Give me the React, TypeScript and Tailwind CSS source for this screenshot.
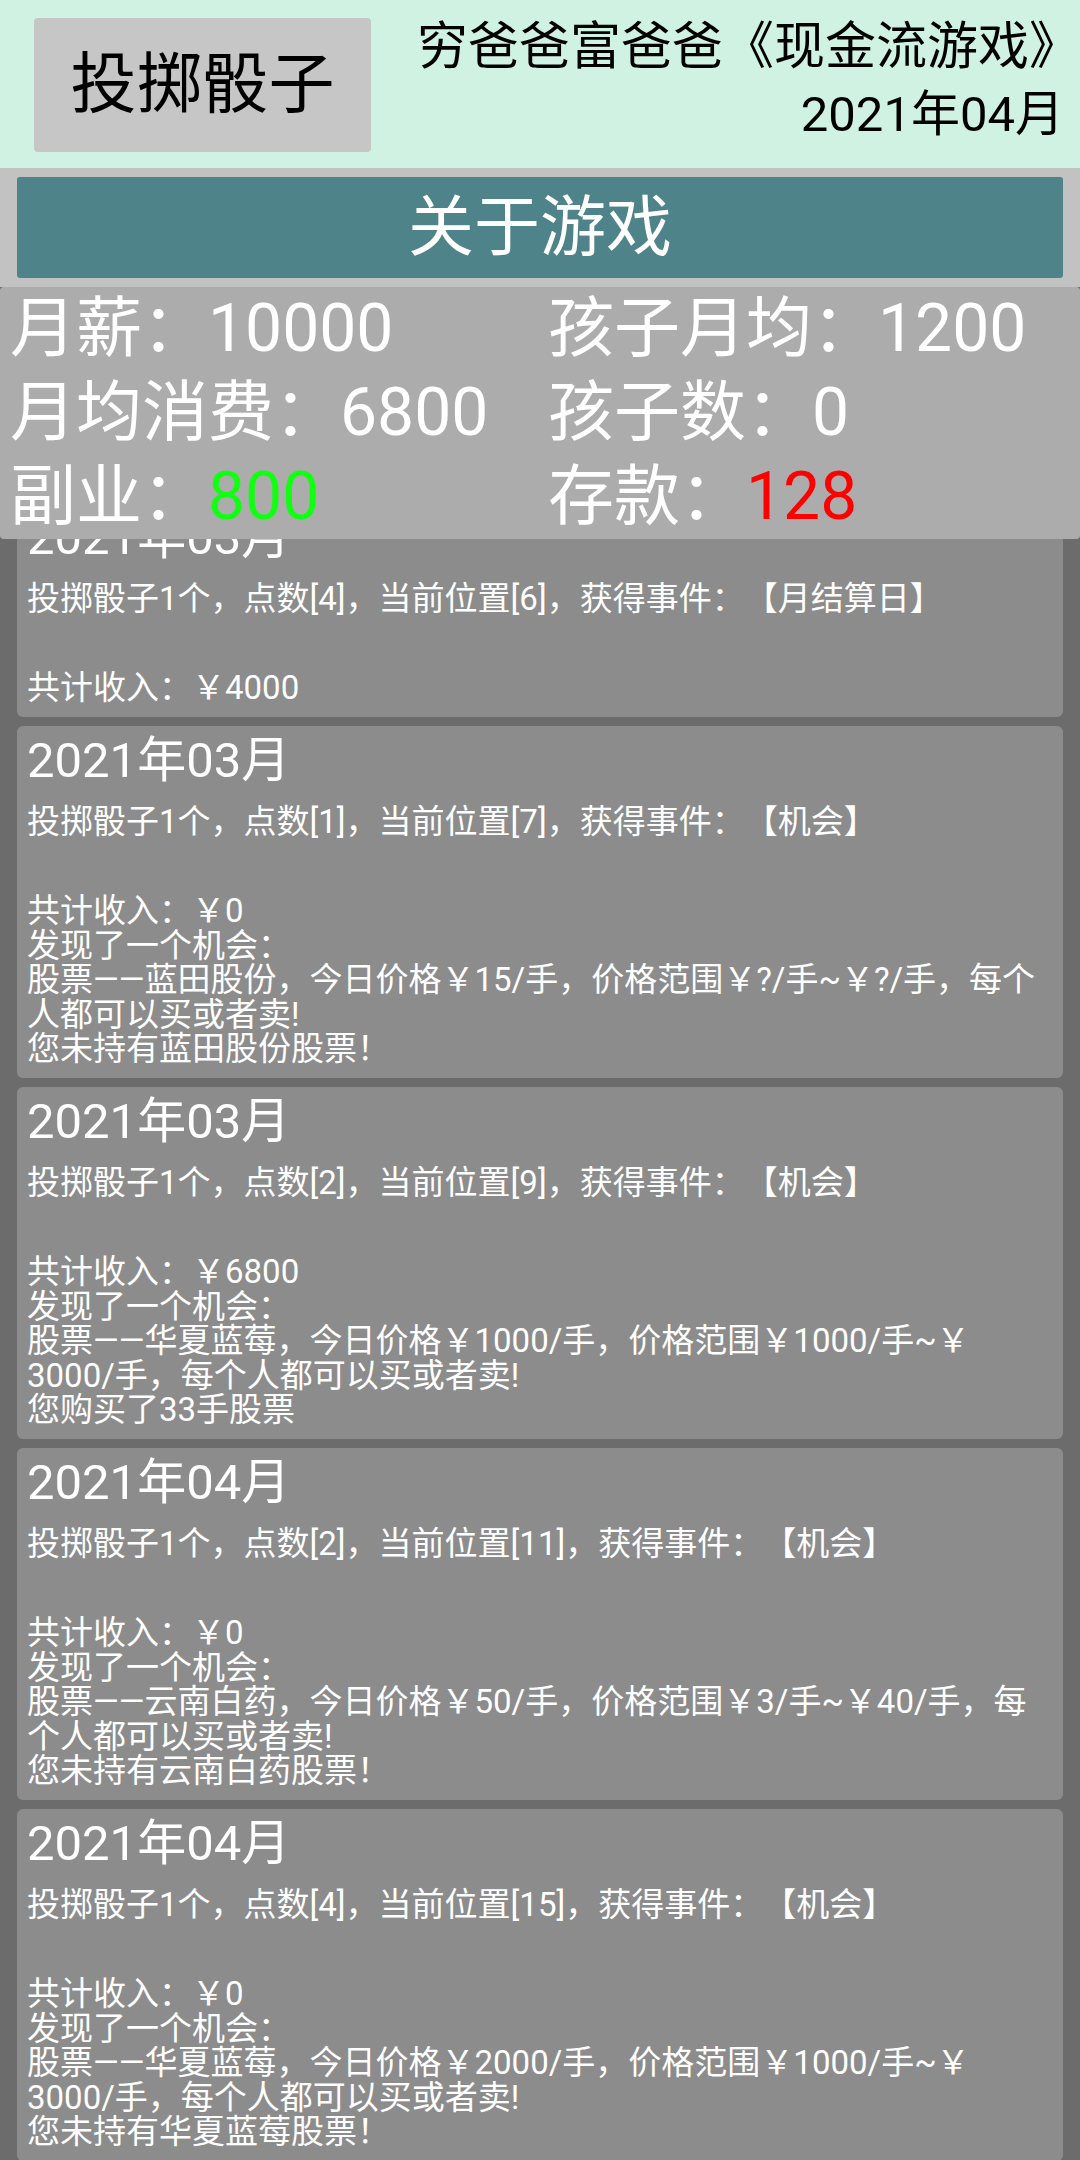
import React from 'react';

interface LogEntry {
  date: string;
  event: string;
  lines: string[];
}

// each wrapped line kept as its own entry so it breaks where the app breaks it
const logs: LogEntry[] = [
  {
    date: '2021年03月',
    event: '投掷骰子1个，点数[4]，当前位置[6]，获得事件：【月结算日】',
    lines: ['共计收入：￥4000'],
  },
  {
    date: '2021年03月',
    event: '投掷骰子1个，点数[1]，当前位置[7]，获得事件：【机会】',
    lines: [
      '共计收入：￥0',
      '发现了一个机会：',
      '股票——蓝田股份，今日价格￥15/手，价格范围￥?/手~￥?/手，每个',
      '人都可以买或者卖!',
      '您未持有蓝田股份股票！',
    ],
  },
  {
    date: '2021年03月',
    event: '投掷骰子1个，点数[2]，当前位置[9]，获得事件：【机会】',
    lines: [
      '共计收入：￥6800',
      '发现了一个机会：',
      '股票——华夏蓝莓，今日价格￥1000/手，价格范围￥1000/手~￥',
      '3000/手，每个人都可以买或者卖!',
      '您购买了33手股票',
    ],
  },
  {
    date: '2021年04月',
    event: '投掷骰子1个，点数[2]，当前位置[11]，获得事件：【机会】',
    lines: [
      '共计收入：￥0',
      '发现了一个机会：',
      '股票——云南白药，今日价格￥50/手，价格范围￥3/手~￥40/手，每',
      '个人都可以买或者卖!',
      '您未持有云南白药股票！',
    ],
  },
  {
    date: '2021年04月',
    event: '投掷骰子1个，点数[4]，当前位置[15]，获得事件：【机会】',
    lines: [
      '共计收入：￥0',
      '发现了一个机会：',
      '股票——华夏蓝莓，今日价格￥2000/手，价格范围￥1000/手~￥',
      '3000/手，每个人都可以买或者卖!',
      '您未持有华夏蓝莓股票！',
    ],
  },
];

const LogCard = ({ entry, first }: { entry: LogEntry; first?: boolean }) => (
  <div
    className={`bg-[#8c8c8c] rounded-[6px] px-[10px] pt-[6px] pb-[11px] text-white shrink-0 ${
      first ? '-mt-[36px]' : ''
    }`}
  >
    <div className="text-[49px] leading-[58px] whitespace-nowrap">{entry.date}</div>
    <div className="mt-[15px] text-[33px] leading-[34.5px] whitespace-nowrap">{entry.event}</div>
    <div className="mt-[54.5px] text-[33px] leading-[34.5px]">
      {entry.lines.map((line, i) => (
        <div key={i} className="whitespace-nowrap">
          {line}
        </div>
      ))}
    </div>
  </div>
);

export default function App() {
  return (
    <div className="w-[1080px] h-[2160px] overflow-hidden flex flex-col bg-[#6c6c6c] font-[Roboto,'Noto_Sans_CJK_SC',sans-serif] [text-spacing-trim:space-all]">
      {/* Top bar */}
      <div className="h-[168px] bg-[#d0f2e2] flex items-start justify-between shrink-0">
        <button className="ml-[34px] mt-[18px] w-[337px] h-[134px] bg-[#c6c6c6] rounded-[4px] text-black text-[66px] leading-none flex items-center justify-center">
          投掷骰子
        </button>
        <div className="flex flex-col items-end pr-[16px] pt-[18px] text-black">
          <div className="-mr-[16px] text-[51px] leading-[58px] whitespace-nowrap">穷爸爸富爸爸《现金流游戏》</div>
          <div className="mt-[10px] text-[49px] leading-[58px] whitespace-nowrap">2021年04月</div>
        </div>
      </div>

      {/* About button */}
      <div className="bg-[#c2c2c2] px-[17px] py-[9px] shrink-0">
        <div className="h-[101px] bg-[#4f838a] rounded-[3px] flex items-center justify-center text-white text-[66px] leading-none">
          关于游戏
        </div>
      </div>

      {/* Stats */}
      <div className="relative z-10 h-[252px] bg-[#acacac] rounded-[4px] pl-[10px] grid grid-cols-[538px_1fr] text-white text-[66px] leading-[84px] whitespace-nowrap shrink-0">
        <div>月薪：10000</div>
        <div>孩子月均：1200</div>
        <div>月均消费：6800</div>
        <div>孩子数：0</div>
        <div>
          副业：<span className="text-[#11ff11]">800</span>
        </div>
        <div>
          存款：<span className="text-[#ff0000]">128</span>
        </div>
      </div>

      {/* Log list */}
      <div className="flex-1 overflow-hidden px-[17px] flex flex-col gap-[9.5px]">
        {logs.map((entry, i) => (
          <LogCard key={i} entry={entry} first={i === 0} />
        ))}
      </div>
    </div>
  );
}
